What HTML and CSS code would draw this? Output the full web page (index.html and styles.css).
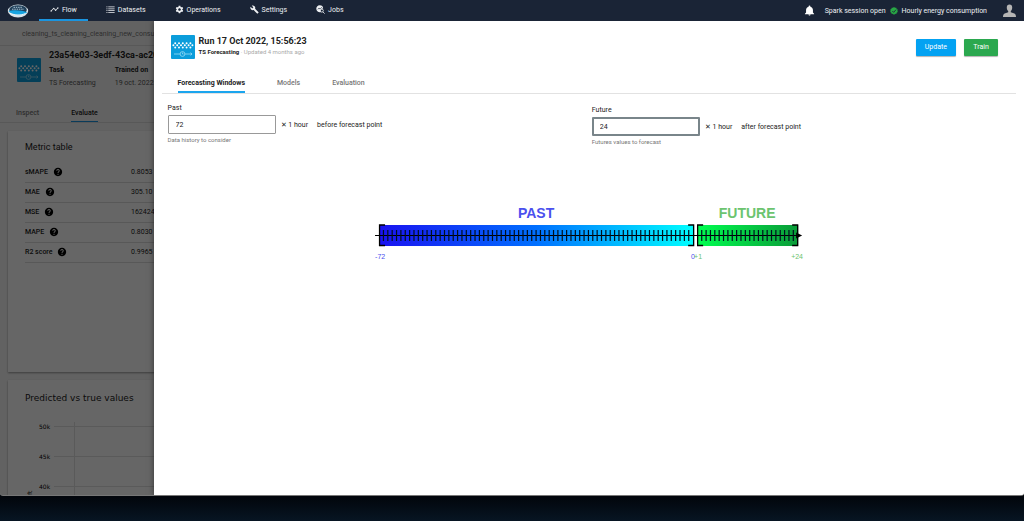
FILE: index.html
```html
<!DOCTYPE html>
<html lang="en">
<head>
<meta charset="utf-8">
<title>Run 17 Oct 2022</title>
<link rel="stylesheet" href="styles.css">
</head>
<body>
<svg class="defs" width="0" height="0" aria-hidden="true">
  <symbol id="tile" viewBox="0 0 24 24">
    <rect width="24" height="24" rx="1" fill="#0b9ddb"/>
    <g fill="none" stroke="#fff" stroke-width="2" stroke-linecap="round" stroke-dasharray="0 3.8">
      <path d="M4.200 8.200H20"/><path d="M2.400 10.300H22"/><path d="M4.200 12.400H20"/>
    </g>
    <g fill="none" stroke="#9bdcf5" stroke-width=".8">
      <path d="M3 19H9M14 19H21M19.500 17.700L21 19L19.500 20.300"/><circle cx="11.500" cy="19" r="2.400"/><path d="M11.500 17.500V19H12.500"/>
    </g>
  </symbol>
  <symbol id="help" viewBox="0 0 24 24">
    <path d="M12 2C6.480 2 2 6.480 2 12s4.480 10 10 10 10-4.480 10-10S17.520 2 12 2zm1 17h-2v-2h2v2zm2.070-7.750l-.9.920C13.450 12.900 13 13.500 13 15h-2v-.5c0-1.100.45-2.100 1.170-2.830l1.240-1.260c.37-.36.59-.86.59-1.410 0-1.100-.9-2-2-2s-2 .9-2 2H8c0-2.210 1.790-4 4-4s4 1.790 4 4c0 .88-.36 1.680-.93 2.250z"/>
  </symbol>
</svg>

<div class="window">
  <header class="topbar">
    <svg class="brand" viewBox="0 0 22 14" role="img" aria-label="Home">
      <ellipse cx="11" cy="7" rx="10.200" ry="6.400" fill="#d9e2e8"/>
      <ellipse cx="11" cy="6" rx="8.800" ry="4.800" fill="#20405a"/>
      <path d="M1.500 7C5 5.600 16 5.800 20 8.300C16.500 12.500 6 12.500 1.500 7Z" fill="#18a5e2"/>
      <path d="M5 5.200H17M6.500 3.300H15.500" stroke="#a9c4d6" stroke-width="1" stroke-dasharray="1.500 .8"/>
      <path d="M3 9.200C8 11.500 14 11.500 18.500 9.500" fill="none" stroke="#fff" stroke-width=".9"/>
    </svg>
    <nav class="menu">
      <a class="menu-item active" href="#"><svg viewBox="0 0 24 24"><path d="M23 8c0 1.100-.9 2-2 2-.18 0-.35-.02-.51-.07l-3.560 3.550c.05.16.07.34.07.52 0 1.100-.9 2-2 2s-2-.9-2-2c0-.18.02-.36.07-.52l-2.550-2.550c-.16.05-.34.07-.52.07s-.36-.02-.52-.07l-4.550 4.560c.05.16.07.33.07.51 0 1.100-.9 2-2 2s-2-.9-2-2 .9-2 2-2c.18 0 .35.02.51.07l4.560-4.550C8.020 9.360 8 9.180 8 9c0-1.100.9-2 2-2s2 .9 2 2c0 .18-.02.36-.07.52l2.550 2.550c.16-.05.34-.07.52-.07s.36.02.52.07l3.550-3.560C19.020 8.350 19 8.180 19 8c0-1.100.9-2 2-2s2 .9 2 2z"/></svg>Flow</a>
      <a class="menu-item" href="#"><svg viewBox="0 0 24 24"><path d="M1 4h3v2H1zM1 9h3v2H1zM1 14h3v2H1zM1 19h3v2H1zM6 4h17v2H6zM6 9h17v2H6zM6 14h17v2H6zM6 19h17v2H6z"/></svg>Datasets</a>
      <a class="menu-item" href="#"><svg viewBox="0 0 24 24"><path d="M19.430 12.980c.04-.32.07-.64.07-.98s-.03-.66-.07-.98l2.110-1.650c.19-.15.24-.42.12-.64l-2-3.460c-.12-.22-.39-.3-.61-.22l-2.490 1c-.52-.4-1.080-.73-1.690-.98l-.38-2.650C14.460 2.180 14.250 2 14 2h-4c-.25 0-.46.18-.49.42l-.38 2.650c-.61.25-1.170.59-1.690.98l-2.490-1c-.23-.09-.49 0-.61.22l-2 3.460c-.13.22-.07.49.12.64l2.110 1.650c-.04.32-.07.65-.07.98s.03.66.07.98l-2.110 1.650c-.19.15-.24.42-.12.64l2 3.460c.12.22.39.3.61.22l2.490-1c.52.4 1.080.73 1.690.98l.38 2.650c.03.24.24.42.49.42h4c.25 0 .46-.18.49-.42l.38-2.650c.61-.25 1.170-.59 1.690-.98l2.490 1c.23.09.49 0 .61-.22l2-3.460c.12-.22.07-.49-.12-.64l-2.110-1.650zM12 15.500c-1.930 0-3.500-1.570-3.500-3.500s1.570-3.500 3.500-3.500 3.500 1.570 3.500 3.500-1.570 3.500-3.500 3.500z"/></svg>Operations</a>
      <a class="menu-item" href="#"><svg viewBox="0 0 24 24"><path d="M22.700 19l-9.100-9.100c.9-2.300.4-5-1.500-6.900-2-2-5-2.400-7.400-1.300L9 6 6 9 1.600 4.700C.4 7.100.9 10.100 2.900 12.100c1.900 1.900 4.600 2.400 6.900 1.500l9.100 9.100c.4.4 1 .4 1.400 0l2.300-2.300c.5-.4.5-1.100.1-1.400z"/></svg>Settings</a>
      <a class="menu-item" href="#"><svg viewBox="0 0 24 24"><path fill-rule="evenodd" d="M10 1a9 9 0 1 0 3 17.400A6 6 0 0 1 19 9.500A9 9 0 0 0 10 1ZM4 11l4-4 3 3 4-5 1 1-5 6-3-3-3 3z"/><path fill="none" stroke="currentColor" stroke-width="2.200" d="M18.500 18.500L23 23M11.500 15a4 4 0 1 0 8 0a4 4 0 1 0-8 0"/></svg>Jobs</a>
    </nav>
    <div class="status">
      <button class="icon-button" aria-label="Notifications"><svg viewBox="0 0 24 24"><path d="M12 23c1.300 0 2.300-1 2.300-2.200H9.700C9.700 22 10.700 23 12 23zm7.500-6.500V11c0-3.500-1.900-6.300-5.500-7.200V3a2 2 0 0 0-4 0v.8C6.400 4.700 4.500 7.500 4.500 11v5.500L2 19v1h20v-1z"/></svg></button>
      <span>Spark session open</span>
      <svg class="ok" viewBox="0 0 24 24"><path fill="#28a745" d="M12 0l3 2.400 3.800-.3 1.200 3.600 3.300 2-1 3.800 1 3.800-3.300 2-1.200 3.600-3.800-.3L12 24l-3-3.400-3.800.3L4 17.300l-3.300-2 1-3.800-1-3.800 3.300-2 1.200-3.600 3.800.3z"/><path d="M7 12l4 4 7-8" fill="none" stroke="#1a2436" stroke-width="2.600"/></svg>
      <span>Hourly energy consumption</span>
      <button class="icon-button avatar" aria-label="Account"><svg viewBox="0 0 24 24"><path d="M12 1C8.600 1 7 3.300 7 6.500C7 9.500 8.200 12 9.600 13v2L3 17.500C1 18.400 0 20 0 24H24C24 20 23 18.400 21 17.500L14.400 15V13C15.800 12 17 9.500 17 6.500C17 3.300 15.400 1 12 1Z"/></svg></button>
    </div>
  </header>

  <div class="stage">
    <main class="page">
      <div class="crumb">cleaning_ts_cleaning_cleaning_new_consumption</div>
      <section class="experiment">
        <svg class="tile"><use href="#tile"/></svg>
        <div>
          <h1>23a54e03-3edf-43ca-ac20-51b7</h1>
          <dl class="facts">
            <div><dt>Task</dt><dd>TS Forecasting</dd></div>
            <div><dt>Trained on</dt><dd>19 oct. 2022</dd></div>
          </dl>
        </div>
      </section>
      <nav class="page-tabs"><a href="#">Inspect</a><a class="active" href="#">Evaluate</a></nav>
      <section class="card metrics">
        <h2>Metric table</h2>
        <table>
          <tr><th>sMAPE <svg><use href="#help"/></svg></th><td>0.8053</td></tr>
          <tr><th>MAE <svg><use href="#help"/></svg></th><td>305.10</td></tr>
          <tr><th>MSE <svg><use href="#help"/></svg></th><td>162424</td></tr>
          <tr><th>MAPE <svg><use href="#help"/></svg></th><td>0.8030</td></tr>
          <tr><th>R2 score <svg><use href="#help"/></svg></th><td>0.9965</td></tr>
        </table>
      </section>
      <section class="card chart">
        <h2>Predicted vs true values</h2>
        <svg class="plot" width="600" height="120">
          <g stroke="#e0e0e0"><path d="M29 15.500H600M29 45.500H600M29 75.500H600M49.500 11V120"/></g>
          <g class="axis"><text x="14" y="18">50k</text><text x="14" y="48">45k</text><text x="14" y="78">40k</text><text transform="translate(7 84) rotate(-90)">ft</text></g>
        </svg>
      </section>
    </main>
    <div class="scrim"></div>

    <aside class="drawer">
      <header class="run">
        <svg class="tile"><use href="#tile"/></svg>
        <div class="run-title">
          <h2>Run 17 Oct 2022, 15:56:23</h2>
          <p><b>TS Forecasting</b> · Updated 4 months ago</p>
        </div>
        <button class="btn update">Update</button>
        <button class="btn train">Train</button>
      </header>
      <nav class="tabs">
        <a class="active" href="#">Forecasting Windows</a>
        <a href="#">Models</a>
        <a href="#">Evaluation</a>
      </nav>
      <form class="fields">
        <div class="field">
          <label for="past">Past</label>
          <div class="row"><input id="past" type="text" value="72"><span>✕ 1 hour</span><span class="hint">before forecast point</span></div>
          <small>Data history to consider</small>
        </div>
        <div class="field future">
          <label for="future">Future</label>
          <div class="row"><input id="future" type="text" value="24"><span>✕ 1 hour</span><span class="hint">after forecast point</span></div>
          <small>Futures values to forecast</small>
        </div>
      </form>
      <svg class="timeline" viewBox="0 0 427 60" role="img" aria-label="Past and future windows">
        <defs>
          <linearGradient id="pastFill"><stop offset="0" stop-color="#1a12f0"/><stop offset=".5" stop-color="#0070ff"/><stop offset="1" stop-color="#00ffff"/></linearGradient>
          <linearGradient id="futureFill"><stop offset="0" stop-color="#00ff50"/><stop offset="1" stop-color="#0a9a38"/></linearGradient>
        </defs>
        <text class="band past" x="161" y="15">PAST</text>
        <text class="band next" x="372" y="15">FUTURE</text>
        <rect x="4" y="22" width="315" height="21" fill="url(#pastFill)"/>
        <rect x="322" y="22" width="101" height="21" fill="url(#futureFill)"/>
        <g fill="none" stroke="#000">
          <path d="M0 32.500H424"/>
          <path stroke-width="11" stroke="#001020" stroke-dasharray="1.200 3.160" d="M7.800 32.500H317M326 32.500H421"/>
          <path stroke-width="1.300" d="M10 22H4.500V42.500H10M313 22H318.500V42.500H313M328 22H322.500V42.500H328M417 22H422.500V42.500H417"/>
        </g>
        <path d="M421 29.500L427 32.500L421 35.500Z"/>
        <g class="mark">
          <text class="past" x="0" y="56">-72</text><text class="past" x="316" y="56">0</text>
          <text class="next" x="319" y="56">+1</text><text class="next" x="416" y="56">+24</text>
        </g>
      </svg>
    </aside>
  </div>
</div>
</body>
</html>
```
FILE: styles.css
```css
* { box-sizing: border-box; }

body {
  margin: 0;
  height: 100vh;
  display: flex;
  flex-direction: column;
  padding-bottom: 25px;
  overflow: hidden;
  background: linear-gradient(#02060c calc(100% - 24px), #071523);
  font: 7px/10px Roboto, "Noto Sans", sans-serif;
  color: #222;
}

h1, h2, p, dl, dd { margin: 0; }
a { color: inherit; text-decoration: none; }
button, input { font: inherit; }
svg { display: block; flex: none; }
.defs { position: absolute; }

.window {
  flex: 1;
  min-height: 0;
  display: flex;
  flex-direction: column;
  overflow: hidden;
  border-bottom: 1px solid #777;
  border-radius: 0 0 3px 3px;
}

/* Top bar */
.topbar {
  display: flex;
  align-items: center;
  height: 21px;
  flex: none;
  padding: 0 8px 0 7px;
  background: #1a2436;
  color: #eef0f3;
}
.brand { width: 22px; height: 14px; margin-right: 10px; }
.menu { display: flex; align-self: stretch; gap: 7px; }
.menu-item {
  display: flex;
  align-items: center;
  justify-content: center;
  gap: 3px;
  padding: 0 11px;
  border-bottom: 2px solid transparent;
}
.menu-item.active { border-color: #1b95e0; }
.menu-item svg { width: 9px; height: 9px; fill: currentColor; }
.status { display: flex; align-items: center; margin-left: auto; gap: 4px; }
.ok { width: 8px; height: 8px; }
.icon-button { border: 0; padding: 0; margin-right: 6px; background: none; color: #fff; }
.icon-button svg { width: 11px; height: 11px; fill: currentColor; }
.avatar { margin: 0 0 0 12px; color: #b5b5b5; }
.avatar svg { width: 13px; height: 13px; }

/* Page under the drawer */
.stage { position: relative; flex: 1; min-height: 0; overflow: hidden; background: #f6f6f6; }
.page { padding: 0 8px; white-space: nowrap; }
.crumb { margin: 0 -8px; padding: 8px 22px 6px; border-bottom: 1px solid #ddd; color: #777; }
.experiment { display: flex; align-items: center; gap: 8px; padding: 4px 9px 0; }
.tile { width: 24px; height: 24px; }
h1, .run h2 { font-size: 9px; line-height: 10px; font-weight: 700; }
.facts { display: flex; gap: 19px; padding-top: 4px; }
.facts dt { font-weight: 700; line-height: 12px; }
.facts dd { color: #555; line-height: 14px; }
.page-tabs { display: flex; gap: 32px; margin: 0 -8px; padding: 18px 16px 0; border-bottom: 1px solid #ddd; color: #777; }
.page-tabs a { padding-bottom: 3px; border-bottom: 1px solid transparent; font-weight: 500; }
.page-tabs .active { color: #222; border-color: #1b95e0; }
.card { margin-top: 8px; padding: 10px 17px; background: #fff; box-shadow: 0 1px 2px rgba(0, 0, 0, .4); }
.card h2 { font-size: 9px; line-height: 12px; font-weight: 400; }
.metrics { height: 241px; }
.metrics table { width: 100%; margin-top: 9px; border-collapse: collapse; table-layout: fixed; }
.metrics tr { border-bottom: 1px solid #ddd; height: 20px; }
.metrics th { width: 106px; padding: 0; text-align: left; font-weight: 500; }
.metrics td { padding: 0; }
.metrics th svg { display: inline-block; width: 10px; height: 10px; margin-left: 3px; vertical-align: middle; }
.chart { padding-bottom: 0; font-family: "DejaVu Sans", sans-serif; }
.chart h2 { font-size: 9px; line-height: 16px; }
.plot { margin-top: 5px; }
.axis { font-size: 6px; }

.scrim { position: absolute; inset: 0; background: rgba(0, 0, 0, .6); }

/* Drawer */
.drawer {
  position: absolute;
  inset: 0 0 0 15%;
  padding: 14px 8px 0;
  background: #fff;
  box-shadow: 0 0 6px rgba(0, 0, 0, .5);
}
.run { display: flex; align-items: center; padding: 0 18px 0 9px; }
.run-title { margin: 0 auto 0 4px; }
.run p { color: #aaa; font-size: 6px; line-height: 12px; }
.run b { color: #222; }
.btn {
  height: 17px;
  min-width: 34px;
  padding: 0 9px;
  border: 0;
  border-radius: 1px;
  box-shadow: 0 1px 1px rgba(0, 0, 0, .3);
  color: #fff;
}
.update { margin-right: 8px; background: #03a2f2; }
.train { background: #2ba84f; }
.tabs { display: flex; gap: 32px; padding: 19px 16px 0; border-bottom: 1px solid #e2e2e2; color: #777; font-weight: 500; }
.tabs a { padding-bottom: 3px; border-bottom: 2px solid transparent; }
.tabs .active { color: #222; font-weight: 700; border-color: #1ba5ee; }

.fields { display: grid; grid-template-columns: 1fr 1fr; padding: 9px 0 0 6px; }
.future { padding-top: 2px; }
.field label { display: block; margin-bottom: 2px; }
.row { display: flex; align-items: center; gap: 5px; }
.row input {
  width: 108px;
  height: 19px;
  padding: 0 7px;
  border: 1px solid #999;
  border-radius: 1px;
  color: #222;
}
.future input { border: 2px solid #79858a; padding: 0 6px; }
.hint { margin-left: 4px; }
.field small { display: block; margin-top: 1px; font-size: 6px; line-height: 10px; color: #777; }

.timeline { width: 50%; margin: 56px auto 0; overflow: visible; }
.timeline text { font-family: "Liberation Sans", Arial, sans-serif; }
.band { font-size: 14px; font-weight: 700; text-anchor: middle; }
.mark { font-size: 7px; }
.past { fill: #4b50ee; }
.next { fill: #6cc46f; }
```
